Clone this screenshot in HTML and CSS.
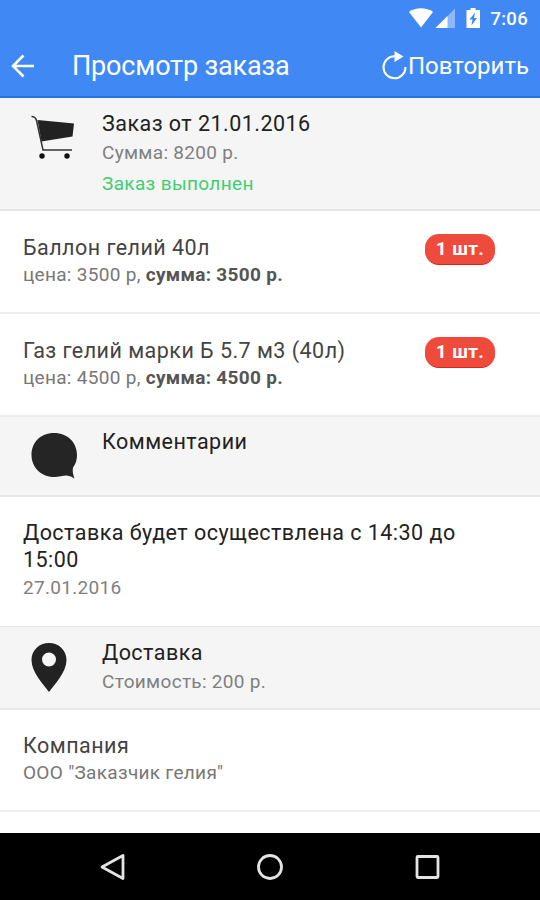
FILE: index.html
```html
<!DOCTYPE html>
<html lang="ru">
<head>
<meta charset="utf-8">
<title>Просмотр заказа</title>
<link rel="stylesheet" href="styles.css">
</head>
<body>
<div class="screen">
  <header class="appbar">
    <div class="status">
      <svg class="status-icons" width="76" height="24" viewBox="0 0 76 24">
        <path d="M0 4C6.500-1 17.500-1 24 4L12 19.500z" fill="#fff"/>
        <path d="M26.500 20L46 .5v19.500z" fill="#8db8fa"/>
        <path d="M26.500 20L38.500 8v12z" fill="#fff"/>
        <path d="M61.500 0h5v2h4.500V20H57.500V2h4z" fill="#fff"/>
        <path d="M66 4.500L60.500 11.500h3l-1 6 5.500-7.500h-3z" fill="#3f87f3"/>
      </svg>
      <span class="clock">7:06</span>
    </div>
    <div class="toolbar">
      <svg class="back" width="24" height="24" viewBox="0 0 24 24" fill="none" stroke="#fff" stroke-width="2.600"><path d="M12.500 1.500L2 12l10.500 10.500M2 12h21"/></svg>
      <h1 class="title">Просмотр заказа</h1>
      <div class="repeat">
        <svg width="26" height="30" viewBox="0 0 26 30"><path d="M13 5.300A11 11 0 1 0 23.500 16" fill="none" stroke="#fff" stroke-width="2"/><path d="M12.500 0l9 5.500-9 5.500z" fill="#fff"/></svg>
        <span>Повторить</span>
      </div>
    </div>
  </header>
  <main class="content">
    <section class="divider order">
      <svg class="icon" width="50" height="50" viewBox="0 0 50 50"><path d="M.5 2.500q4 0 5 4L12 36H41" fill="none" stroke="#333" stroke-width="1.500"/><path d="M6.500 6l36.500 3.500-1.500 13-31 5z" fill="#222"/><circle cx="11" cy="42" r="2.700" fill="#111"/><circle cx="36" cy="42" r="2.700" fill="#111"/></svg>
      <div>
        <h2 class="name">Заказ от 21.01.2016</h2>
        <p class="sub">Сумма: 8200 р.</p>
        <p class="done">Заказ выполнен</p>
      </div>
    </section>
    <section class="item">
      <div><h3 class="name">Баллон гелий 40л</h3><p class="price">цена: 3500 р, <b>сумма: 3500 р.</b></p></div>
      <span class="badge">1 шт.</span>
    </section>
    <section class="item">
      <div><h3 class="name">Газ гелий марки Б 5.7 м3 (40л)</h3><p class="price">цена: 4500 р, <b>сумма: 4500 р.</b></p></div>
      <span class="badge">1 шт.</span>
    </section>
    <section class="divider comments">
      <svg class="icon" width="50" height="50" viewBox="0 0 50 50"><path d="M23 1C9 1 .5 11 .5 23S10 45 23 45c5.500 0 10-2 13-1.500q4 .5 7.500 3-2.500-6.500-1.500-11c3-4 4-8 4-12.500C46 11 37 1 23 1z" fill="#252525"/></svg>
      <div><h2 class="name">Комментарии</h2></div>
    </section>
    <section class="comment">
      <p class="name text">Доставка будет осуществлена с 14:30 до 15:00</p>
      <p class="date">27.01.2016</p>
    </section>
    <section class="divider delivery">
      <svg class="icon" width="50" height="50" viewBox="0 0 50 50"><path fill-rule="evenodd" d="M18 0C8 0 .5 7.500 .5 17 .5 29 12 41 18 49 24 41 35.500 29 35.500 17 35.500 7.500 28 0 18 0zM18 9.500a7 7 0 1 1 0 14 7 7 0 0 1 0-14z" fill="#222"/></svg>
      <div><h2 class="name">Доставка</h2><p class="sub">Стоимость: 200 р.</p></div>
    </section>
    <section class="item company">
      <div><h3 class="name">Компания</h3><p class="price">ООО "Заказчик гелия"</p></div>
    </section>
  </main>
  <nav class="navbar">
    <svg width="28" height="28" viewBox="0 0 28 28"><path d="M24 2.500v23L3 14z"/></svg>
    <svg width="28" height="28" viewBox="0 0 28 28"><circle cx="14" cy="14" r="11.500"/></svg>
    <svg width="28" height="28" viewBox="0 0 28 28"><rect x="4" y="3.500" width="21" height="21" rx="1"/></svg>
  </nav>
</div>
</body>
</html>
```
FILE: styles.css
```css
* { box-sizing: border-box; }
body, h1, h2, h3, p { margin: 0; font-weight: 400; }
body { font-family: Roboto, "Noto Sans", sans-serif; background: #fff; }
svg { display: block; flex: none; }
.screen { width: 540px; height: 900px; display: flex; flex-direction: column; overflow: hidden; }
.appbar { flex: none; height: 98px; background: #4089f5; border-bottom: 2px solid #2378e4; color: #fff; }
.status { height: 36px; padding: 8px 12px 0 0; display: flex; justify-content: flex-end; gap: 5px; }
.clock { font-size: 18.500px; line-height: 22px; font-weight: 500; letter-spacing: .3px; }
.toolbar { height: 60px; display: flex; align-items: center; padding: 0 11px; }
.title { font-size: 27px; line-height: 32px; margin-left: 37px; letter-spacing: -.17px; white-space: nowrap; }
.repeat { margin-left: auto; display: flex; align-items: center; font-size: 24px; line-height: 30px; letter-spacing: 0; }
.content { flex: 1; min-height: 0; overflow: hidden; }
.divider { display: flex; gap: 21px; padding: 11px 0 0 31px; background: #f5f5f5; border-bottom: 2px solid #e8e8e8; }
.icon { margin-top: 5px; }
.order { height: 113px; }
.name { font-size: 21.500px; line-height: 29px; color: #222; letter-spacing: .47px; white-space: nowrap; }
.sub { font-size: 19px; line-height: 28px; margin-top: 1px; color: #808080; letter-spacing: .3px; }
.done { font-size: 19px; line-height: 34px; color: #42cd70; letter-spacing: .35px; }
.item { height: 103px; display: flex; justify-content: space-between; align-items: flex-start; padding: 22px 45px 0 23px; border-bottom: 2px solid #eee; }
.item .name { color: #444; }
.price { font-size: 19px; line-height: 26px; color: #777; letter-spacing: .3px; white-space: nowrap; }
.price b { color: #555; font-weight: 700; }
.badge { width: 70px; height: 31px; border-radius: 14px; background: #ef4b3c; border-bottom: 1px solid #e0241a; color: #fff; font-size: 19px; line-height: 29px; font-weight: 700; text-align: center; letter-spacing: .4px; margin-top: 1px; }
.comments { height: 80px; padding-top: 10px; }
.comment { height: 130px; padding: 22px 60px 0 23px; border-bottom: 1px solid #e6e6e6; }
.comment .text { line-height: 27px; white-space: normal; }
.date { font-size: 19px; line-height: 30px; color: #808080; letter-spacing: .3px; }
.delivery { height: 83px; }
.company { height: 102px; padding-top: 21px; }
.navbar { flex: none; height: 67px; background: #000; display: flex; justify-content: center; align-items: center; gap: 129px; }
.navbar svg { fill: none; stroke: #e4e4e4; stroke-width: 2.800; stroke-linejoin: round; }
```
